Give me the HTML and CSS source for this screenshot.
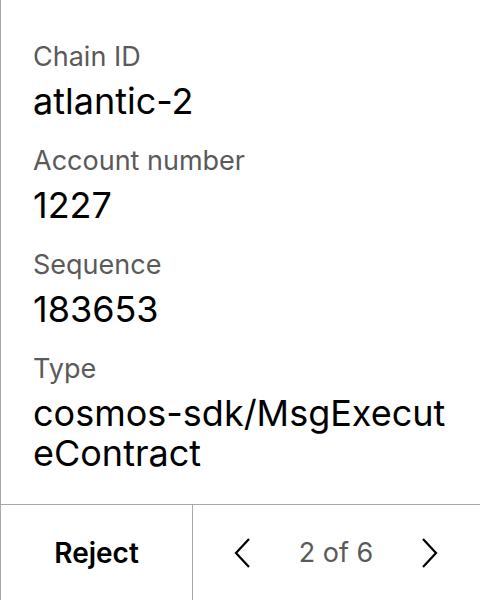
FILE: index.html
```html
<!DOCTYPE html>
<html>
<head>
<meta charset="utf-8">
<link rel="stylesheet" href="styles.css">
</head>
<body>
<div class="panel">
  <div class="content">
    <div class="field">
      <div class="label">Chain ID</div>
      <div class="value">atlantic-2</div>
    </div>
    <div class="field">
      <div class="label">Account number</div>
      <div class="value">1227</div>
    </div>
    <div class="field">
      <div class="label">Sequence</div>
      <div class="value">183653</div>
    </div>
    <div class="field">
      <div class="label">Type</div>
      <div class="value">cosmos-sdk/MsgExecuteContract</div>
    </div>
  </div>
  <div class="footer">
    <div class="reject">Reject</div>
    <div class="pager">
      <svg class="chev" width="20" height="32" viewBox="0 0 20 32"><path d="M16 2 L3 16 L16 30" fill="none" stroke="#000" stroke-width="2.2"/></svg>
      <span class="count">2 of 6</span>
      <svg class="chev" width="20" height="32" viewBox="0 0 20 32"><path d="M4 2 L17 16 L4 30" fill="none" stroke="#000" stroke-width="2.2"/></svg>
    </div>
  </div>
</div>
</body>
</html>
```
FILE: styles.css
```css
html, body {
  margin: 0;
  padding: 0;
  background: #fff;
}
body {
  font-family: Inter, "Noto Sans", sans-serif;
  color: #000;
}
.panel {
  width: 480px;
  height: 600px;
  box-sizing: border-box;
  border-left: 1px solid #a8a8a8;
  display: flex;
  flex-direction: column;
}
.content {
  flex: 1;
  padding: 41px 32px 0 32px;
  display: flex;
  flex-direction: column;
  gap: 24px;
}
.field {
  display: flex;
  flex-direction: column;
  gap: 8px;
}
.label {
  font-size: 27px;
  line-height: 32px;
  color: #5a5a5a;
}
.value {
  font-size: 36px;
  line-height: 40px;
  color: #000;
  word-break: break-all;
}
.footer {
  height: 96px;
  border-top: 1px solid #a8a8a8;
  display: flex;
  box-sizing: border-box;
}
.reject {
  width: 191px;
  border-right: 1px solid #a8a8a8;
  display: flex;
  align-items: center;
  justify-content: center;
  font-size: 28px;
  font-weight: 600;
}
.pager {
  flex: 1;
  display: flex;
  align-items: center;
  justify-content: space-between;
  padding: 0 41px 0 40px;
}
.count {
  font-size: 27px;
  color: #5a5a5a;
}
.chev {
  display: block;
}
```
